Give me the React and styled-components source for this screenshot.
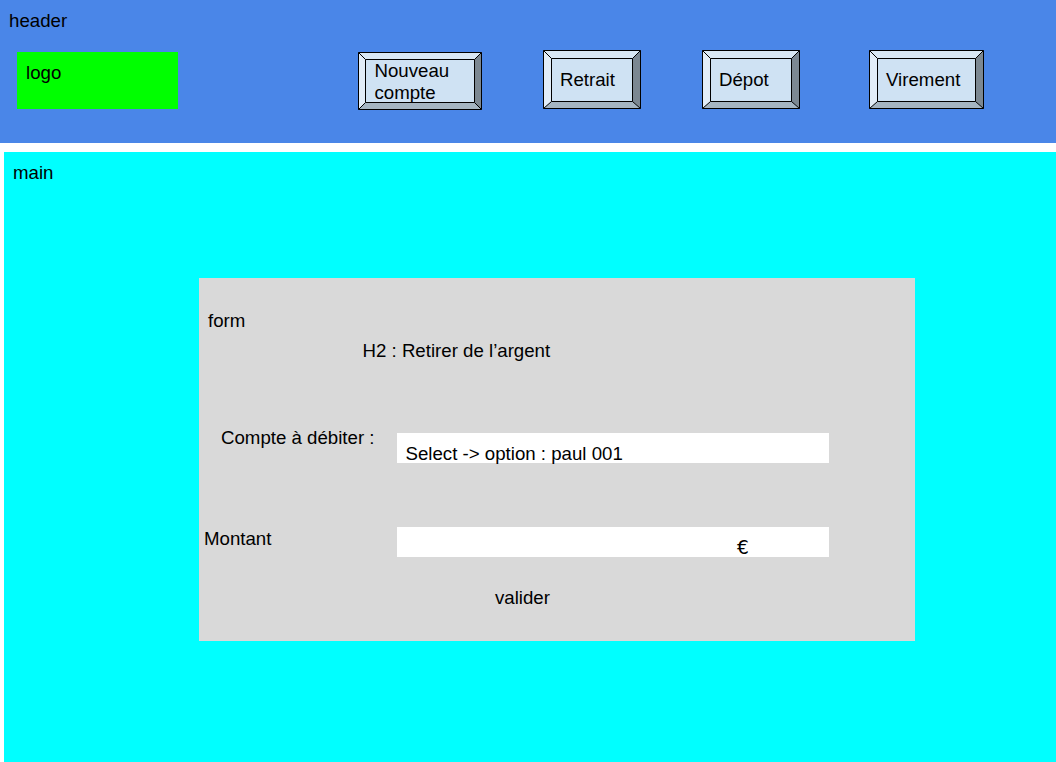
import React from "react";
import styled, { createGlobalStyle } from "styled-components";

const GlobalStyle = createGlobalStyle`
  *, *::before, *::after { box-sizing: border-box; }
  body {
    margin: 0;
    background: #fff;
    color: #000;
    font: 18.67px/22px "Liberation Sans", Arial, sans-serif;
    overflow: hidden;
  }
`;

const Page = styled.div`
  display: flex;
  flex-direction: column;
  gap: 9px;
  height: 762px;
`;

const Header = styled.header`
  height: 143px;
  padding-top: 10px;
  background: #4a86e8;
`;

const Caption = styled.div`
  padding-left: 9px;
`;

const HeaderRow = styled.div`
  display: flex;
  align-items: flex-start;
  margin-top: 18px;
  padding-left: 17px;
`;

const Logo = styled.div`
  width: 161px;
  height: 57px;
  margin-top: 2px;
  padding: 10px 9px;
  background: #00ff00;
`;

const Nav = styled.nav`
  display: flex;
  align-items: flex-start;
  margin-left: 180px;
`;

const NavButton = styled.button`
  position: relative;
  width: ${(p) => p.$width}px;
  height: ${(p) => p.$height}px;
  margin: ${(p) => p.$top || 0}px 0 0 ${(p) => p.$gap || 0}px;
  padding: ${(p) => p.$padTop}px 0 0 ${(p) => p.$padLeft}px;
  border: 0;
  background: none;
  color: inherit;
  font: inherit;
  text-align: left;
  display: flex;
  align-items: flex-start;
`;

const BevelDrawing = styled.svg`
  position: absolute;
  inset: 0;
`;

const ButtonLabel = styled.span`
  position: relative;
`;

const Main = styled.main`
  flex: 1;
  margin-left: 4px;
  padding-top: 10px;
  background: #00ffff;
`;

const Form = styled.form`
  width: 716px;
  height: 363px;
  margin: 94px 0 0 195px;
  padding-top: 32px;
  background: #d9d9d9;
`;

const Title = styled.h2`
  margin: 8px 0 0 163.5px;
  font: inherit;
`;

const Field = styled.div`
  display: flex;
  align-items: flex-start;
  height: 30px;
  margin-top: ${(p) => p.$top}px;
`;

const Label = styled.label`
  width: 198px;
  padding-left: ${(p) => p.$indent}px;
  margin-top: ${(p) => p.$shift}px;
  white-space: nowrap;
`;

const Control = styled.div`
  width: 432px;
  height: 30px;
  padding: 10px 0 0 ${(p) => p.$indent}px;
  background: #fff;
  white-space: nowrap;
`;

const Currency = styled.span`
  font-family: "DejaVu Sans", sans-serif;
  line-height: 1;
`;

const Submit = styled.button`
  display: block;
  margin: 30px 0 0 296px;
  padding: 0;
  border: 0;
  background: none;
  color: inherit;
  font: inherit;
`;

function Bevel({ w, h, d }) {
  const l = 0.5, t = 0.5, r = w - 0.5, b = h - 0.5;
  const il = l + d, it = t + d, ir = r - d, ib = b - 7;
  return (
    <BevelDrawing width={w} height={h} aria-hidden="true">
      <rect x={l} y={t} width={r - l} height={b - t} fill="#cfe2f3" />
      <polygon points={`${l},${t} ${r},${t} ${ir},${it} ${il},${it}`} fill="#d9e8f5" />
      <polygon points={`${l},${t} ${il},${it} ${il},${ib} ${l},${b}`} fill="#e2edf8" />
      <polygon points={`${r},${t} ${r},${b} ${ir},${ib} ${ir},${it}`} fill="#7c8892" />
      <polygon points={`${l},${b} ${il},${ib} ${ir},${ib} ${r},${b}`} fill="#a5b5c2" />
      <path
        d={`M${l} ${t}H${r}V${b}H${l}ZM${il} ${it}H${ir}V${ib}H${il}ZM${l} ${t}L${il} ${it}M${r} ${t}L${ir} ${it}M${r} ${b}L${ir} ${ib}M${l} ${b}L${il} ${ib}`}
        fill="none"
        stroke="#000"
      />
    </BevelDrawing>
  );
}

function BevelButton({ width, height, depth, children, ...rest }) {
  return (
    <NavButton type="button" $width={width} $height={height} {...rest}>
      <Bevel w={width} h={height} d={depth} />
      <ButtonLabel>{children}</ButtonLabel>
    </NavButton>
  );
}

export default function App() {
  return (
    <>
      <GlobalStyle />
      <Page>
        <Header>
          <Caption>header</Caption>
          <HeaderRow>
            <Logo>logo</Logo>
            <Nav>
              <BevelButton width={124} height={58} depth={7} $top={2} $padTop={8} $padLeft={16.5}>
                Nouveau<br />compte
              </BevelButton>
              <BevelButton width={98} height={59} depth={8} $gap={61} $padTop={19} $padLeft={17}>
                Retrait
              </BevelButton>
              <BevelButton width={98} height={59} depth={8} $gap={61} $padTop={19} $padLeft={17}>
                Dépot
              </BevelButton>
              <BevelButton width={115} height={59} depth={8} $gap={69} $padTop={19} $padLeft={17}>
                Virement
              </BevelButton>
            </Nav>
          </HeaderRow>
        </Header>
        <Main>
          <Caption>main</Caption>
          <Form>
            <Caption>form</Caption>
            <Title>H2 : Retirer de l’argent</Title>
            <Field $top={71}>
              <Label $indent={22} $shift={-6}>Compte à débiter :</Label>
              <Control $indent={8.5}>Select -&gt; option : paul 001</Control>
            </Field>
            <Field $top={64}>
              <Label $indent={5} $shift={1}>Montant</Label>
              <Control $indent={340}><Currency>€</Currency></Control>
            </Field>
            <Submit type="button">valider</Submit>
          </Form>
        </Main>
      </Page>
    </>
  );
}
